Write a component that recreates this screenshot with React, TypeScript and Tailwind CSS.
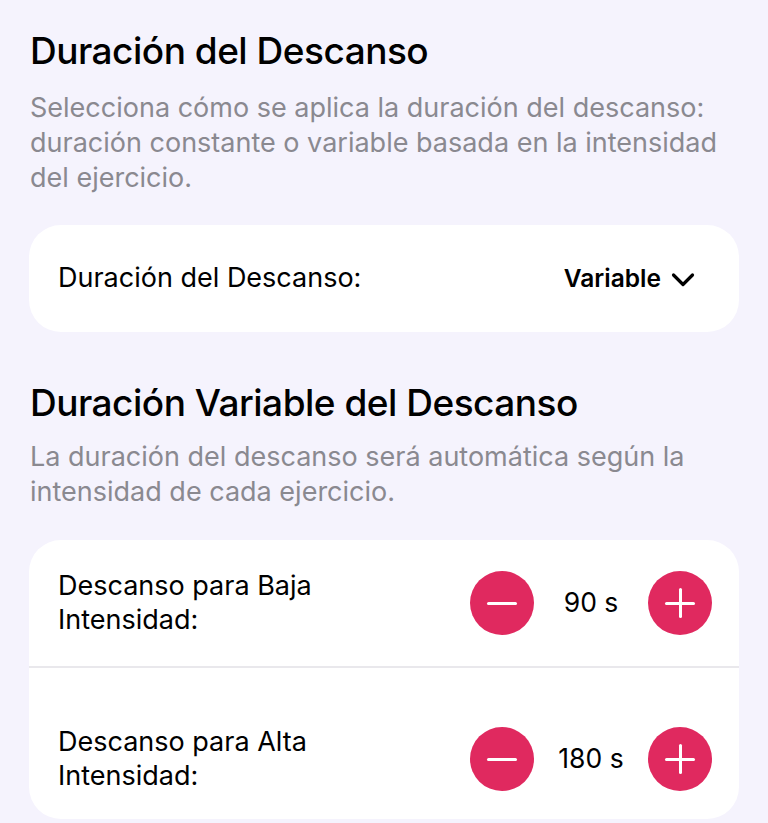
const font = { fontFamily: "Inter, 'Noto Sans', sans-serif" }

function Stepper({ value }: { value: string }) {
    return (
        <div className="flex items-center">
            <button className="w-[64px] h-[64px] rounded-full bg-[#e0295f] flex items-center justify-center">
                <span className="block w-[30px] h-[3px] rounded-full bg-white" />
            </button>
            <span className="w-[114px] text-center text-[26.5px] text-black">{value}</span>
            <button className="relative w-[64px] h-[64px] rounded-full bg-[#e0295f] flex items-center justify-center">
                <span className="block w-[30px] h-[3px] rounded-full bg-white" />
                <span className="absolute block w-[3px] h-[30px] rounded-full bg-white" />
            </button>
        </div>
    )
}

export default function App() {
    return (
        <div className="min-h-[823px] bg-[#f5f3fd] px-[29px] pt-[24px]" style={font}>
            {/* Rest mode */}
            <h1 className="pl-px text-[37px] leading-[54px] font-medium tracking-[-0.5px] text-black">
                Duración del Descanso
            </h1>
            <p className="pl-px mt-[12px] text-[27px] leading-[35px] text-[#8a8990]">
                Selecciona cómo se aplica la duración del descanso: duración constante o variable basada en la
                intensidad del ejercicio.
            </p>

            <div className="mt-[30px] h-[107px] rounded-[32px] bg-white flex items-center justify-between pl-[29px] pr-[44px]">
                <span className="text-[27px] text-black">Duración del Descanso:</span>
                <span className="flex items-center gap-[10px] text-[24.5px] font-semibold text-black">
                    Variable
                    <svg width="24" height="16" viewBox="0 0 24 16" fill="none" className="mt-[2px]">
                        <polyline
                            points="2.5,3 12,12.5 21.5,3"
                            stroke="black"
                            strokeWidth="3.2"
                            strokeLinecap="round"
                            strokeLinejoin="round"
                        />
                    </svg>
                </span>
            </div>

            {/* Variable durations */}
            <h2 className="pl-px mt-[44px] text-[37px] leading-[54px] font-medium tracking-[-0.5px] text-black">
                Duración Variable del Descanso
            </h2>
            <p className="pl-px mt-[9px] text-[27px] leading-[35px] text-[#8a8990]">
                La duración del descanso será automática según la intensidad de cada ejercicio.
            </p>

            <div className="mt-[31px] rounded-[32px] bg-white overflow-hidden">
                <div className="h-[126px] flex items-center justify-between pl-[29px] pr-[27px]">
                    <span className="text-[27px] leading-[34px] text-black">
                        Descanso para Baja
                        <br />
                        Intensidad:
                    </span>
                    <Stepper value="90 s" />
                </div>
                <div className="h-[2px] bg-[#e9e8ec]" />
                <div className="h-[151px] flex items-center justify-between pl-[29px] pr-[27px] pt-[31px]">
                    <span className="text-[27px] leading-[34px] text-black">
                        Descanso para Alta
                        <br />
                        Intensidad:
                    </span>
                    <Stepper value="180 s" />
                </div>
            </div>
        </div>
    )
}
